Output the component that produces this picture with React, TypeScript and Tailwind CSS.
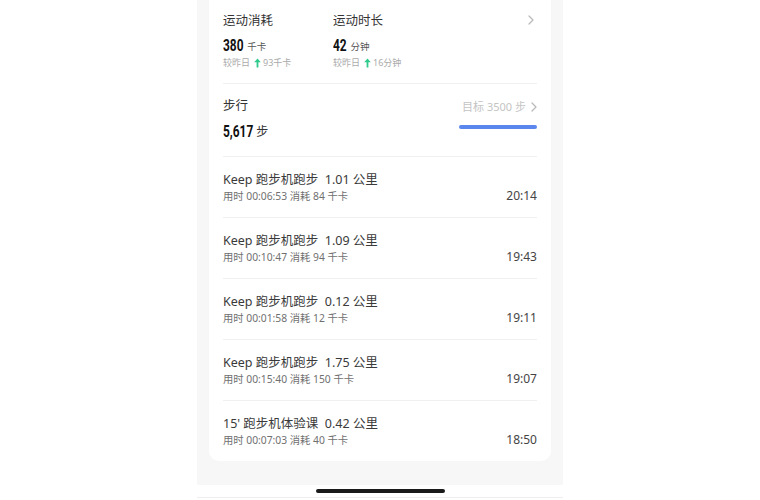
import React from "react";

const rows = [
  { t: "Keep 跑步机跑步  1.01 公里", s: "用时 00:06:53 消耗 84 千卡", time: "20:14" },
  { t: "Keep 跑步机跑步  1.09 公里", s: "用时 00:10:47 消耗 94 千卡", time: "19:43" },
  { t: "Keep 跑步机跑步  0.12 公里", s: "用时 00:01:58 消耗 12 千卡", time: "19:11" },
  { t: "Keep 跑步机跑步  1.75 公里", s: "用时 00:15:40 消耗 150 千卡", time: "19:07" },
  { t: "15' 跑步机体验课  0.42 公里", s: "用时 00:07:03 消耗 40 千卡", time: "18:50" },
];

const Up = () => (
  <svg width="7" height="10" viewBox="0 0 7 10" className="mx-[2px]">
    <path d="M3.5 0.5 L6.8 4.3 H4.4 V9.5 H2.6 V4.3 H0.2 Z" fill="#2ecb8c" />
  </svg>
);

const Chevron = ({ c = "#b8b8b8" }: { c?: string }) => (
  <svg width="6" height="10" viewBox="0 0 6 10">
    <path d="M1 1 L5 5 L1 9" fill="none" stroke={c} strokeWidth="1.2" strokeLinecap="round" strokeLinejoin="round" />
  </svg>
);

const Num = ({ v, mr }: { v: string; mr: string }) => (
  <span
    className={`inline-block origin-left scale-x-[0.7] text-[17px] font-bold text-[#111] leading-[20px] ${mr}`}
    style={{ fontFamily: '"Roboto", "Noto Sans", sans-serif' }}
  >
    {v}
  </span>
);

export default function App() {
  return (
    <div
      className="w-[760px] h-[500px] bg-white flex justify-center overflow-hidden"
      style={{ fontFamily: '"Noto Sans", "Noto Sans CJK SC", sans-serif' }}
    >
      <div className="w-[366px] h-full flex flex-col">
        <div className="h-[485px] bg-[#f7f7f7] px-[12px]">
          <div className="bg-white rounded-b-[10px] px-[14px]">
            {/* Section 1 */}
            <div className="pt-[12px] pb-[13px] border-b border-[#f0f0f0] flex">
              <div className="w-[110px]">
                <div className="h-[18px] leading-[18px] text-[12.5px] text-[#333]">运动消耗</div>
                <div className="mt-[5px] h-[20px] flex items-end leading-[20px]">
                  <Num v="380" mr="mr-[-9px]" />
                  <span className="text-[9.5px] text-[#555] ml-[4px] leading-[17px]">千卡</span>
                </div>
                <div className="mt-[1px] h-[14px] flex items-center text-[9px] text-[#aaa]">
                  较昨日 <span className="ml-[2px]"><Up /></span>93千卡
                </div>
              </div>
              <div className="flex-1">
                <div className="h-[18px] leading-[18px] text-[12.5px] text-[#333]">运动时长</div>
                <div className="mt-[5px] h-[20px] flex items-end leading-[20px]">
                  <Num v="42" mr="mr-[-6px]" />
                  <span className="text-[9.5px] text-[#555] ml-[4px] leading-[17px]">分钟</span>
                </div>
                <div className="mt-[1px] h-[14px] flex items-center text-[9px] text-[#aaa]">
                  较昨日 <span className="ml-[2px]"><Up /></span>16分钟
                </div>
              </div>
              <div className="pt-[3px] pr-[3px]">
                <Chevron />
              </div>
            </div>
            {/* Section 2 */}
            <div className="pt-[13px] pb-[15px] border-b border-[#f0f0f0] flex justify-between">
              <div>
                <div className="h-[18px] leading-[18px] text-[12.5px] text-[#333]">步行</div>
                <div className="mt-[6px] h-[20px] flex items-end leading-[20px]">
                  <Num v="5,617" mr="mr-[-13px]" />
                  <span className="text-[12px] text-[#333] ml-[3px] leading-[19px]">步</span>
                </div>
              </div>
              <div className="w-[78px] flex flex-col items-end">
                <div className="mt-[1px] h-[18px] flex items-center gap-[5px] text-[11px] text-[#c4c4c4] whitespace-nowrap">
                  <span>目标 3500 步</span>
                  <Chevron />
                </div>
                <div className="mt-[9px] w-[78px] h-[4px] rounded-full bg-[#5a86ee]" />
              </div>
            </div>
            {/* Rows */}
            {rows.map((r, i) => (
              <div
                key={i}
                className={`pt-[14px] pb-[14px] flex justify-between items-end ${i < rows.length - 1 ? "border-b border-[#f0f0f0]" : ""}`}
              >
                <div>
                  <div className="h-[18px] leading-[18px] text-[12.5px] text-[#3a3a3a] whitespace-pre">{r.t}</div>
                  <div className="h-[14px] leading-[14px] text-[10.3px] text-[#707070]">{r.s}</div>
                </div>
                <div className="h-[14px] leading-[14px] text-[12px] text-[#444]">{r.time}</div>
              </div>
            ))}
          </div>
        </div>
        <div className="flex-1 bg-white flex flex-col items-center">
          <div className="mt-[4px] w-[129px] h-[4px] rounded-full bg-[#1a1a1a]" />
          <div className="mt-auto mb-[2px] w-full h-[1px] bg-[#eeeeee]" />
        </div>
      </div>
    </div>
  );
}
